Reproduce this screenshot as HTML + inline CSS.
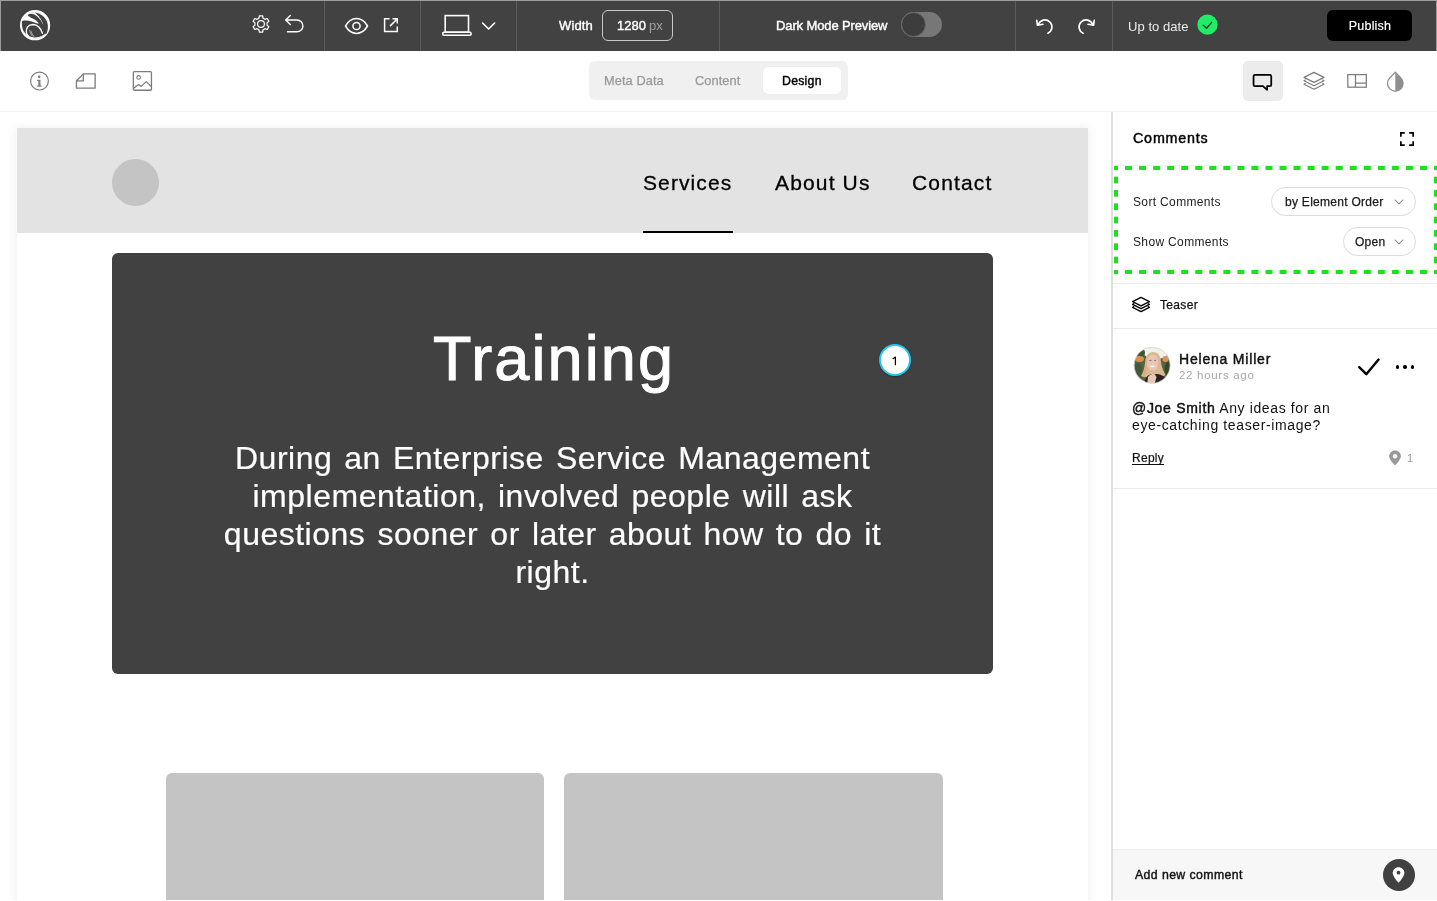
<!DOCTYPE html>
<html><head><meta charset="utf-8"><title>Editor</title>
<style>
html,body{margin:0;padding:0;}
body{width:1437px;height:901px;overflow:hidden;position:relative;background:#fff;font-family:"Liberation Sans", sans-serif;}
.t{position:absolute;white-space:nowrap;will-change:transform;}
svg{overflow:visible;}
</style></head><body>
<div style="position:absolute;left:0px;top:0px;width:1437px;height:51px;background:#424242;"></div>
<div style="position:absolute;left:0px;top:0px;width:1437px;height:1px;background:#9c9c9c;"></div>
<div style="position:absolute;left:0px;top:0px;width:1px;height:51px;background:#9c9c9c;"></div>
<div style="position:absolute;left:1436px;top:0px;width:1px;height:51px;background:#9c9c9c;"></div>
<div style="position:absolute;left:324px;top:1px;width:1px;height:50px;background:#5c5c5c;"></div>
<div style="position:absolute;left:420px;top:1px;width:1px;height:50px;background:#5c5c5c;"></div>
<div style="position:absolute;left:516px;top:1px;width:1px;height:50px;background:#5c5c5c;"></div>
<div style="position:absolute;left:719px;top:1px;width:1px;height:50px;background:#5c5c5c;"></div>
<div style="position:absolute;left:1015px;top:1px;width:1px;height:50px;background:#5c5c5c;"></div>
<div style="position:absolute;left:1112px;top:1px;width:1px;height:50px;background:#5c5c5c;"></div>
<svg style="position:absolute;left:18px;top:8px" width="35" height="35" viewBox="18 8 35 35">
<circle cx="35.1" cy="25.2" r="13.3" fill="#fff"/>
<circle cx="35.1" cy="25.2" r="14.05" fill="none" stroke="#fff" stroke-width="2.1"/>
<path d="M34.6 12.5 C41 12.9 47.4 18.5 47.9 25.5 C48.1 29 47.4 32 46 34.5 L44.2 32.5 C44.6 24 40.6 16.8 34.6 12.5 Z" fill="#424242"/>
<path d="M27.6 15.3 C29.3 13.6 32 13.4 34.2 14.6 C38 16.6 41.6 20.5 43 24.5 C43.6 27 43.5 30 43 32 L41.5 30 C40.5 27 39.5 24.5 37.8 22.2 C35.5 19.6 33 18.6 31 17.7 C29.8 17 28.5 16.2 27.6 15.3 Z" fill="#424242"/>
<path d="M22.0 20.9 C25 20.2 28.4 20.2 31.8 21.4 C34.5 22.6 37 23.5 39.8 23.8 L43.2 24.3 C45 26.5 46.2 29.5 46.4 31.5 L44.5 34.3 C41.5 36.6 38 37.4 34.5 37.4 C30.5 37.2 27.2 35.6 24.8 32.8 C23 30.5 22 27.5 21.9 24.5 Z" fill="#424242"/>
<path d="M28.7 36.6 C26.3 34 25.7 30 27.6 26.8 C29 25 31 24.5 33.2 24.5 C37 24.6 40.5 27.6 42.4 33.2" stroke="#fff" stroke-width="1.35" fill="none" stroke-linecap="round"/>
<path d="M29.6 29.8 C29.9 32.5 31 34.8 32.8 36.4 M31.2 31.2 C31.6 33.5 32.6 35.3 34.3 36.6" stroke="#fff" stroke-width="0.55" fill="none"/>
</svg>
<svg style="position:absolute;left:250.9px;top:14px" width="20" height="20" viewBox="0 0 20 20" fill="none">
<path d="M7.98 4.14 L8.35 1.87 L11.65 1.87 L12.02 4.14 L14.07 5.32 L16.22 4.50 L17.87 7.37 L16.09 8.82 L16.09 11.18 L17.87 12.63 L16.22 15.50 L14.07 14.68 L12.02 15.86 L11.65 18.13 L8.35 18.13 L7.98 15.86 L5.93 14.68 L3.78 15.50 L2.13 12.63 L3.91 11.18 L3.91 8.82 L2.13 7.37 L3.78 4.50 L5.93 5.32 Z" stroke="#fff" stroke-width="1.2" stroke-linejoin="round"/>
<circle cx="10" cy="10" r="3.4" stroke="#fff" stroke-width="1.2"/>
</svg>
<svg style="position:absolute;left:283px;top:13px" width="24" height="22" viewBox="0 0 24 22" fill="none">
<path d="M3 7 H14 A5.9 5.9 0 0 1 14 18.8 H4.5" stroke="#fff" stroke-width="1.4" stroke-linecap="round"/>
<path d="M7.3 2.6 L2.8 7 L7.3 11.4" stroke="#fff" stroke-width="1.4" stroke-linecap="round" stroke-linejoin="round"/>
</svg>
<svg style="position:absolute;left:343px;top:15.5px" width="27" height="20" viewBox="0 0 27 20" fill="none">
<path d="M2.5 10 C6 4 10 2.6 13.5 2.6 C17 2.6 21 4 24.5 10 C21 16 17 17.4 13.5 17.4 C10 17.4 6 16 2.5 10 Z" stroke="#fff" stroke-width="1.5" stroke-linejoin="round"/>
<circle cx="13.5" cy="10" r="3.6" stroke="#fff" stroke-width="1.5"/>
</svg>
<svg style="position:absolute;left:382px;top:16px" width="18" height="18" viewBox="0 0 18 18" fill="none">
<path d="M7.5 2.8 H2.6 V15.4 H15.3 V10.5" stroke="#fff" stroke-width="1.5"/>
<path d="M10.5 2.8 H15.3 V7.6 M15.1 3 L8 10.1" stroke="#fff" stroke-width="1.5"/>
</svg>
<svg style="position:absolute;left:440px;top:13px" width="33" height="25" viewBox="0 0 33 25" fill="none">
<rect x="5.2" y="2.6" width="23.3" height="16.6" stroke="#fff" stroke-width="1.6"/>
<rect x="2.8" y="19.2" width="28.2" height="3" rx="1" stroke="#fff" stroke-width="1.6"/>
</svg>
<svg style="position:absolute;left:480px;top:19.6px" width="17" height="13" viewBox="0 0 17 13" fill="none">
<path d="M2.6 3 L8.6 9 L14.6 3" stroke="#fff" stroke-width="1.6" stroke-linecap="round" stroke-linejoin="round"/>
</svg>
<div class="t" style="left:558.5px;top:19.20px;font-size:13px;line-height:13px;font-weight:400;color:#fff;letter-spacing:0.15px;-webkit-text-stroke:0.4px #fff;">Width</div>
<div style="position:absolute;left:602px;top:10px;width:71px;height:31px;box-sizing:border-box;border:1.5px solid #c8c8c8;border-radius:6px;"></div>
<div class="t" style="left:617.3px;top:19.20px;font-size:13px;line-height:13px;font-weight:400;color:#fff;letter-spacing:0px;-webkit-text-stroke:0.4px #fff;">1280</div>
<div class="t" style="left:648.5px;top:19.20px;font-size:13px;line-height:13px;font-weight:400;color:#a0a0a0;letter-spacing:0px;">px</div>
<div class="t" style="left:776px;top:18.90px;font-size:13px;line-height:13px;font-weight:400;color:#fff;letter-spacing:-0.12px;-webkit-text-stroke:0.4px #fff;">Dark Mode Preview</div>
<div style="position:absolute;left:901px;top:12px;width:41px;height:25px;box-sizing:border-box;background:#777;border-radius:13px;"></div>
<div style="position:absolute;left:901px;top:12px;width:25px;height:25px;box-sizing:border-box;background:#3d3d3d;border:1.5px solid #6a6a6a;border-radius:50%;"></div>
<svg style="position:absolute;left:1033px;top:15px" width="24" height="22" viewBox="0 0 24 22" fill="none"><path d="M5.47 9.52 A6.95 6.95 0 1 1 14.94 18.2" stroke="#fff" stroke-width="1.65" stroke-linecap="round"/>
<path d="M3.75 5.3 L4.4 10.2 L9.9 9.3" stroke="#fff" stroke-width="1.65" stroke-linecap="round" stroke-linejoin="round"/></svg>
<svg style="position:absolute;left:1073.85px;top:15px" width="24" height="22" viewBox="0 0 24 22" fill="none"><g transform="translate(24 0) scale(-1 1)"><path d="M5.47 9.52 A6.95 6.95 0 1 1 14.94 18.2" stroke="#fff" stroke-width="1.65" stroke-linecap="round"/>
<path d="M3.75 5.3 L4.4 10.2 L9.9 9.3" stroke="#fff" stroke-width="1.65" stroke-linecap="round" stroke-linejoin="round"/></g></svg>
<div class="t" style="left:1128px;top:19.90px;font-size:13px;line-height:13px;font-weight:400;color:#eaeaea;letter-spacing:0.05px;">Up to date</div>
<svg style="position:absolute;left:1197px;top:14px" width="21" height="21" viewBox="0 0 21 21" fill="none">
<circle cx="10.5" cy="10.7" r="10.1" fill="#21ec67"/>
<path d="M6.3 11.3 L9.6 14.3 L14.6 8.4" stroke="#2d3a30" stroke-width="1.45" stroke-linecap="round" stroke-linejoin="round"/>
</svg>
<div style="position:absolute;left:1327px;top:10px;width:85px;height:31px;background:#000;border-radius:6px;"></div>
<div class="t" style="left:1329.5px;width:80px;text-align:center;top:20.07px;font-size:12.5px;line-height:12.5px;font-weight:400;color:#fff;letter-spacing:0.2px;-webkit-text-stroke:0.2px #fff;">Publish</div>
<div style="position:absolute;left:0px;top:110.5px;width:1437px;height:1.2px;background:#f2f2f2;"></div>
<svg style="position:absolute;left:28px;top:70px" width="23" height="23" viewBox="0 0 23 23" fill="none">
<circle cx="11.5" cy="11.05" r="8.9" stroke="#7c7c7c" stroke-width="1.15"/>
<circle cx="11.2" cy="6.8" r="1.35" fill="#7c7c7c"/>
<path d="M9.1 9.8 H12.5 V15.4 H13.7 V16.8 H9.3 V15.4 H10.3 V10.9 H9.1 Z" fill="#7c7c7c"/>
</svg>
<svg style="position:absolute;left:74px;top:71px" width="24" height="20" viewBox="0 0 24 20" fill="none">
<path d="M9.3 2.85 H21.15 V17.15 H2.45 V9.8 Z" stroke="#7c7c7c" stroke-width="1.3" stroke-linejoin="round"/>
<path d="M9.3 2.85 V9.8 H2.45" stroke="#7c7c7c" stroke-width="1.3" stroke-linejoin="round"/>
</svg>
<svg style="position:absolute;left:131px;top:69px" width="24" height="24" viewBox="0 0 24 24" fill="none">
<rect x="2.35" y="2.65" width="18.1" height="18.6" rx="1" stroke="#7c7c7c" stroke-width="1.3"/>
<circle cx="7.6" cy="8.4" r="1.8" stroke="#7c7c7c" stroke-width="1.1"/>
<path d="M2.1 19.8 L7.6 15.4 L10.2 17.4 L15.3 12.6 L20.6 17.9" stroke="#7c7c7c" stroke-width="1.3" stroke-linejoin="round"/>
</svg>
<div style="position:absolute;left:589px;top:61px;width:259px;height:39px;background:#f0f0f0;border-radius:6px;"></div>
<div style="position:absolute;left:763px;top:67px;width:78px;height:27px;background:#fff;border-radius:5px;box-shadow:0 0 1px rgba(0,0,0,0.08);"></div>
<div class="t" style="left:604px;top:74.73px;font-size:12.8px;line-height:12.8px;font-weight:400;color:#999;letter-spacing:0.08px;-webkit-text-stroke:0.25px #999;">Meta Data</div>
<div class="t" style="left:695px;top:74.73px;font-size:12.8px;line-height:12.8px;font-weight:400;color:#999;letter-spacing:0.08px;-webkit-text-stroke:0.25px #999;">Content</div>
<div class="t" style="left:782px;top:74.79px;font-size:12.3px;line-height:12.3px;font-weight:400;color:#000;letter-spacing:0.25px;-webkit-text-stroke:0.4px #000;">Design</div>
<div style="position:absolute;left:1243px;top:61px;width:40px;height:40px;background:#ececec;border-radius:5px;"></div>
<svg style="position:absolute;left:1250px;top:71px" width="25" height="23" viewBox="0 0 25 23" fill="none">
<path d="M5.05 3.75 H19.75 Q21.25 3.75 21.25 5.25 V13.65 Q21.25 15.15 19.75 15.15 H17.1 V18.8 L12.9 15.15 H5.05 Q3.55 15.15 3.55 13.65 V5.25 Q3.55 3.75 5.05 3.75 Z" stroke="#000" stroke-width="1.75" stroke-linejoin="round"/>
</svg>
<svg style="position:absolute;left:1302px;top:70px" width="24" height="23" viewBox="0 0 24 23" fill="none">
<path d="M12 2.4 L22 7.4 L12 12.4 L2 7.4 Z" stroke="#7c7c7c" stroke-width="1.2" stroke-linejoin="round"/>
<path d="M3.6 9.8 L2 10.8 L12 15.8 L22 10.8 L20.4 9.8" stroke="#7c7c7c" stroke-width="1.2" stroke-linejoin="round"/>
<path d="M3.6 13.2 L2 14.2 L12 19.2 L22 14.2 L20.4 13.2" stroke="#7c7c7c" stroke-width="1.2" stroke-linejoin="round"/>
</svg>
<svg style="position:absolute;left:1345px;top:72px" width="24" height="18" viewBox="0 0 24 18" fill="none">
<rect x="2.8" y="2.6" width="18.5" height="12.6" stroke="#7c7c7c" stroke-width="1.25"/>
<path d="M10.5 2.6 V15.2 M10.5 11.05 H21.3" stroke="#7c7c7c" stroke-width="1.25"/>
</svg>
<svg style="position:absolute;left:1384px;top:70px" width="22" height="24" viewBox="0 0 22 24" fill="none">
<path d="M11.3 2.2 L16.9 7.97 A7.8 7.8 0 1 1 5.7 7.97 Z" stroke="#8a8a8a" stroke-width="1.2" stroke-linejoin="round"/>
<path d="M11.3 2.2 L16.9 7.97 A7.8 7.8 0 0 1 11.3 21.2 Z" fill="#8f8f8f"/>
</svg>
<div style="position:absolute;left:17px;top:128px;width:1071px;height:800px;background:#fff;box-shadow:0 0 10px rgba(0,0,0,0.075);"></div>
<div style="position:absolute;left:17px;top:128px;width:1071px;height:105px;background:#e3e3e3;"></div>
<div style="position:absolute;left:112px;top:159px;width:47px;height:47px;background:#c4c4c4;border-radius:50%;"></div>
<div class="t" style="left:643px;top:171.96px;font-size:21px;line-height:21px;font-weight:400;color:#000;letter-spacing:1.1px;-webkit-text-stroke:0.3px #000;">Services</div>
<div class="t" style="left:775px;top:171.96px;font-size:21px;line-height:21px;font-weight:400;color:#000;letter-spacing:1.15px;-webkit-text-stroke:0.3px #000;">About Us</div>
<div class="t" style="left:912px;top:171.96px;font-size:21px;line-height:21px;font-weight:400;color:#000;letter-spacing:1.15px;-webkit-text-stroke:0.3px #000;">Contact</div>
<div style="position:absolute;left:643px;top:231px;width:90px;height:2px;background:#000;"></div>
<div style="position:absolute;left:112px;top:253px;width:881px;height:421px;background:#414141;border-radius:6px;"></div>
<div class="t" style="left:153.60000000000002px;width:800px;text-align:center;top:327.18px;font-size:63px;line-height:63px;font-weight:400;color:#fff;letter-spacing:2.1px;-webkit-text-stroke:1px #fff;">Training</div>
<div class="t" style="left:162.25px;width:781px;top:439.1px;font-size:32px;line-height:38px;color:#fff;text-align:center;letter-spacing:0.5px;word-spacing:2.7px;-webkit-text-stroke:0.2px #fff;">During an Enterprise Service Management<br>implementation, involved people will ask<br>questions sooner or later about how to do it<br>right.</div>
<div style="position:absolute;left:878.6px;top:344.3px;width:32px;height:32px;box-sizing:border-box;background:#fff;border:2px solid #1fc7f2;border-radius:50%;box-shadow:0 1px 2px rgba(0,0,0,0.25);"></div>
<svg style="position:absolute;left:888px;top:353.5px" width="14" height="14" viewBox="0 0 14 14" fill="none"><path d="M4.7 5 L7.4 3.1 V11.3" stroke="#000" stroke-width="1.25" stroke-linejoin="round"/></svg>
<div style="position:absolute;left:166px;top:773px;width:378px;height:200px;background:#c4c4c4;border-radius:6px;"></div>
<div style="position:absolute;left:564px;top:773px;width:379px;height:200px;background:#c4c4c4;border-radius:6px;"></div>
<div style="position:absolute;left:1111px;top:112px;width:326px;height:789px;background:#fff;"></div>
<div style="position:absolute;left:1111px;top:112px;width:2px;height:789px;background:#dedede;"></div>
<div class="t" style="left:1132.8px;top:130.73px;font-size:14.3px;line-height:14.3px;font-weight:400;color:#000;letter-spacing:0.8px;-webkit-text-stroke:0.45px #000;">Comments</div>
<svg style="position:absolute;left:1398px;top:130px" width="18" height="18" viewBox="0 0 18 18" fill="none">
<path d="M2.85 6.8 V2.85 H6.8 M11.2 2.85 H15.15 V6.8 M15.15 11.2 V15.15 H11.2 M6.8 15.15 H2.85 V11.2" stroke="#000" stroke-width="1.7"/>
</svg>
<div style="position:absolute;left:1113px;top:165px;width:324px;height:1px;background:#f0f0f0;"></div>
<div class="t" style="left:1132.5px;top:195.63px;font-size:12px;line-height:12px;font-weight:400;color:#222;letter-spacing:0.35px;">Sort Comments</div>
<div class="t" style="left:1132.5px;top:235.83px;font-size:12px;line-height:12px;font-weight:400;color:#222;letter-spacing:0.35px;">Show Comments</div>
<div style="position:absolute;left:1271px;top:187px;width:145px;height:29px;box-sizing:border-box;border:1px solid #dcdcdc;border-radius:15px;"></div>
<div class="t" style="left:1285px;top:195.63px;font-size:12px;line-height:12px;font-weight:400;color:#1a1a1a;letter-spacing:0.28px;-webkit-text-stroke:0.25px #1a1a1a;">by Element Order</div>
<div style="position:absolute;left:1343px;top:227px;width:73px;height:29px;box-sizing:border-box;border:1px solid #dcdcdc;border-radius:15px;"></div>
<div class="t" style="left:1355px;top:235.83px;font-size:12px;line-height:12px;font-weight:400;color:#1a1a1a;letter-spacing:0.28px;-webkit-text-stroke:0.25px #1a1a1a;">Open</div>
<svg style="position:absolute;left:1393px;top:196.5px" width="12" height="10" viewBox="0 0 12 10" fill="none"><path d="M2.2 3.2 L6 6.8 L9.8 3.2" stroke="#8c8c8c" stroke-width="1.15" stroke-linecap="round" stroke-linejoin="round"/></svg>
<svg style="position:absolute;left:1393px;top:236.5px" width="12" height="10" viewBox="0 0 12 10" fill="none"><path d="M2.2 3.2 L6 6.8 L9.8 3.2" stroke="#8c8c8c" stroke-width="1.15" stroke-linecap="round" stroke-linejoin="round"/></svg>
<svg style="position:absolute;left:0;top:0" width="1437" height="901" viewBox="0 0 1437 901"><g fill="#1ee01e"><rect x="1114.00" y="166.00" width="4.00" height="4.00"/><rect x="1434.00" y="166.00" width="4.00" height="4.00"/><rect x="1114.00" y="270.00" width="4.00" height="4.00"/><rect x="1434.00" y="270.00" width="4.00" height="4.00"/><rect x="1125.02" y="166.00" width="7.02" height="4.00"/><rect x="1125.02" y="270.00" width="7.02" height="4.00"/><rect x="1139.07" y="166.00" width="7.02" height="4.00"/><rect x="1139.07" y="270.00" width="7.02" height="4.00"/><rect x="1153.11" y="166.00" width="7.02" height="4.00"/><rect x="1153.11" y="270.00" width="7.02" height="4.00"/><rect x="1167.16" y="166.00" width="7.02" height="4.00"/><rect x="1167.16" y="270.00" width="7.02" height="4.00"/><rect x="1181.20" y="166.00" width="7.02" height="4.00"/><rect x="1181.20" y="270.00" width="7.02" height="4.00"/><rect x="1195.24" y="166.00" width="7.02" height="4.00"/><rect x="1195.24" y="270.00" width="7.02" height="4.00"/><rect x="1209.29" y="166.00" width="7.02" height="4.00"/><rect x="1209.29" y="270.00" width="7.02" height="4.00"/><rect x="1223.33" y="166.00" width="7.02" height="4.00"/><rect x="1223.33" y="270.00" width="7.02" height="4.00"/><rect x="1237.38" y="166.00" width="7.02" height="4.00"/><rect x="1237.38" y="270.00" width="7.02" height="4.00"/><rect x="1251.42" y="166.00" width="7.02" height="4.00"/><rect x="1251.42" y="270.00" width="7.02" height="4.00"/><rect x="1265.47" y="166.00" width="7.02" height="4.00"/><rect x="1265.47" y="270.00" width="7.02" height="4.00"/><rect x="1279.51" y="166.00" width="7.02" height="4.00"/><rect x="1279.51" y="270.00" width="7.02" height="4.00"/><rect x="1293.56" y="166.00" width="7.02" height="4.00"/><rect x="1293.56" y="270.00" width="7.02" height="4.00"/><rect x="1307.60" y="166.00" width="7.02" height="4.00"/><rect x="1307.60" y="270.00" width="7.02" height="4.00"/><rect x="1321.64" y="166.00" width="7.02" height="4.00"/><rect x="1321.64" y="270.00" width="7.02" height="4.00"/><rect x="1335.69" y="166.00" width="7.02" height="4.00"/><rect x="1335.69" y="270.00" width="7.02" height="4.00"/><rect x="1349.73" y="166.00" width="7.02" height="4.00"/><rect x="1349.73" y="270.00" width="7.02" height="4.00"/><rect x="1363.78" y="166.00" width="7.02" height="4.00"/><rect x="1363.78" y="270.00" width="7.02" height="4.00"/><rect x="1377.82" y="166.00" width="7.02" height="4.00"/><rect x="1377.82" y="270.00" width="7.02" height="4.00"/><rect x="1391.87" y="166.00" width="7.02" height="4.00"/><rect x="1391.87" y="270.00" width="7.02" height="4.00"/><rect x="1405.91" y="166.00" width="7.02" height="4.00"/><rect x="1405.91" y="270.00" width="7.02" height="4.00"/><rect x="1419.96" y="166.00" width="7.02" height="4.00"/><rect x="1419.96" y="270.00" width="7.02" height="4.00"/><rect x="1114.00" y="176.67" width="4.00" height="6.67"/><rect x="1434.00" y="176.67" width="4.00" height="6.67"/><rect x="1114.00" y="190.00" width="4.00" height="6.67"/><rect x="1434.00" y="190.00" width="4.00" height="6.67"/><rect x="1114.00" y="203.33" width="4.00" height="6.67"/><rect x="1434.00" y="203.33" width="4.00" height="6.67"/><rect x="1114.00" y="216.67" width="4.00" height="6.67"/><rect x="1434.00" y="216.67" width="4.00" height="6.67"/><rect x="1114.00" y="230.00" width="4.00" height="6.67"/><rect x="1434.00" y="230.00" width="4.00" height="6.67"/><rect x="1114.00" y="243.33" width="4.00" height="6.67"/><rect x="1434.00" y="243.33" width="4.00" height="6.67"/><rect x="1114.00" y="256.67" width="4.00" height="6.67"/><rect x="1434.00" y="256.67" width="4.00" height="6.67"/></g></svg>
<div style="position:absolute;left:1113px;top:283px;width:324px;height:1px;background:#ececec;"></div>
<svg style="position:absolute;left:1130px;top:295px" width="22" height="20" viewBox="0 0 22 20" fill="none">
<path d="M11 2.4 L19.4 6.6 L11 10.8 L2.6 6.6 Z" stroke="#000" stroke-width="1.3" stroke-linejoin="round"/>
<path d="M4.2 8.5 L2.6 9.4 L11 13.6 L19.4 9.4 L17.8 8.5" stroke="#000" stroke-width="1.3" stroke-linejoin="round"/>
<path d="M4.2 11.4 L2.6 12.3 L11 16.6 L19.4 12.3 L17.8 11.4" stroke="#000" stroke-width="1.3" stroke-linejoin="round"/>
</svg>
<div class="t" style="left:1160px;top:298.73px;font-size:12px;line-height:12px;font-weight:400;color:#111;letter-spacing:0.33px;-webkit-text-stroke:0.25px #111;">Teaser</div>
<div style="position:absolute;left:1113px;top:328px;width:324px;height:1px;background:#ececec;"></div>
<svg style="position:absolute;left:1133px;top:346px" width="39" height="39" viewBox="0 0 39 39">
<defs><clipPath id="av"><circle cx="19.1" cy="19.35" r="18"/></clipPath>
<filter id="bl" x="-20%" y="-20%" width="140%" height="140%"><feGaussianBlur stdDeviation="0.65"/></filter></defs>
<g clip-path="url(#av)"><g filter="url(#bl)">
<rect x="-2" y="-2" width="43" height="43" fill="#566444"/>
<ellipse cx="23" cy="5" rx="13" ry="8" fill="#f3efe9"/>
<ellipse cx="8" cy="6.5" rx="4" ry="3.5" fill="#3c5232"/>
<ellipse cx="6.5" cy="13" rx="4.5" ry="3" fill="#dd8f50"/>
<ellipse cx="32.5" cy="13" rx="3" ry="3" fill="#d9965a"/>
<ellipse cx="35" cy="23" rx="3.5" ry="7" fill="#364a2c"/>
<ellipse cx="5" cy="25" rx="4" ry="8" fill="#44583a"/>
<path d="M20 6 C14.5 6 12.5 11 12 17 C11.5 22 10 27 8 30 C12 32 16 31 19 30 C23 31 28 32 32.5 29 C30.5 25 28.5 21 28 16 C27.5 10 25.5 6 20 6 Z" fill="#d9b892"/>
<path d="M10 29 C11 25 12 21 12.5 18 C13 23 12.5 27 11.5 31 Z" fill="#e8a46e"/>
<ellipse cx="19.7" cy="16.5" rx="5.6" ry="8" fill="#e9c6b6"/>
<ellipse cx="17.4" cy="14.3" rx="1.2" ry="0.6" fill="#8a6a5e"/>
<ellipse cx="22.1" cy="14.3" rx="1.2" ry="0.6" fill="#8a6a5e"/>
<ellipse cx="19.5" cy="20.3" rx="2.3" ry="1" fill="#fbf5f2"/>
<path d="M11 40 C11.5 34 13 30 17 28.5 L24 28 C29 28.5 33 31 34 36 L34 40 Z" fill="#27231f"/>
<path d="M14 40 L15 31 C16.5 28.5 19 27.5 21.5 28 L23.5 31 L21 40 Z" fill="#e6c8b8"/>
</g></g>
<circle cx="19.1" cy="19.35" r="18" fill="none" stroke="#d0d0d0" stroke-width="0.8"/>
</svg>
<div class="t" style="left:1179.2px;top:351.97px;font-size:14px;line-height:14px;font-weight:400;color:#111;letter-spacing:0.8px;-webkit-text-stroke:0.45px #111;">Helena Miller</div>
<div class="t" style="left:1179px;top:369.80px;font-size:11.5px;line-height:11.5px;font-weight:400;color:#a8a8a8;letter-spacing:0.7px;">22 hours ago</div>
<svg style="position:absolute;left:1356px;top:356px" width="26" height="22" viewBox="0 0 26 22" fill="none"><path d="M3.2 11.2 L10.3 18.2 L22.6 3.6" stroke="#000" stroke-width="2.4" stroke-linecap="round" stroke-linejoin="round"/></svg>
<div style="position:absolute;left:1395.5px;top:365.4px;width:3.6px;height:3.6px;background:#000;border-radius:50%;"></div>
<div style="position:absolute;left:1403.2px;top:365.4px;width:3.6px;height:3.6px;background:#000;border-radius:50%;"></div>
<div style="position:absolute;left:1410.8px;top:365.4px;width:3.6px;height:3.6px;background:#000;border-radius:50%;"></div>
<div class="t" style="left:1131.5px;top:399.5px;font-size:14px;line-height:17px;color:#111;letter-spacing:0.62px;width:260px;"><span style="letter-spacing:0.7px;-webkit-text-stroke:0.45px #111;">@Joe Smith</span> Any ideas for an<br>eye-catching teaser-image?</div>
<div class="t" style="left:1131.5px;top:452.03px;font-size:12px;line-height:12px;font-weight:400;color:#111;letter-spacing:0.28px;text-decoration:underline;text-underline-offset:2px;-webkit-text-stroke:0.2px #111;">Reply</div>
<svg style="position:absolute;left:1387px;top:449px" width="16" height="18" viewBox="0 0 16 18" fill="none"><path d="M8 1.6 C4.6 1.6 2.2 4.1 2.2 7.3 C2.2 10.8 8 16.6 8 16.6 C8 16.6 13.8 10.8 13.8 7.3 C13.8 4.1 11.4 1.6 8 1.6 Z" fill="#999"/><circle cx="8" cy="7.2" r="2.2" fill="#fff"/></svg>
<div class="t" style="left:1406.5px;top:452.76px;font-size:11px;line-height:11px;font-weight:400;color:#999;letter-spacing:0px;">1</div>
<div style="position:absolute;left:1113px;top:488px;width:324px;height:1px;background:#ececec;"></div>
<div style="position:absolute;left:1113px;top:849px;width:324px;height:52px;background:#f7f7f7;border-top:1px solid #ececec;"></div>
<div class="t" style="left:1134.5px;top:868.69px;font-size:12.3px;line-height:12.3px;font-weight:400;color:#111;letter-spacing:0.4px;-webkit-text-stroke:0.4px #111;">Add new comment</div>
<div style="position:absolute;left:1382.6px;top:858.6px;width:32px;height:32px;background:#414141;border-radius:50%;"></div>
<svg style="position:absolute;left:1391px;top:866px" width="16" height="18" viewBox="0 0 16 18" fill="none"><path d="M7.55 1.2 C4.3 1.2 1.7 3.7 1.7 6.9 C1.7 10.6 7.55 16.7 7.55 16.7 C7.55 16.7 13.4 10.6 13.4 6.9 C13.4 3.7 10.8 1.2 7.55 1.2 Z" fill="#fff"/><circle cx="7.5" cy="6.7" r="1.9" fill="#414141"/></svg>
<div style="position:absolute;left:0px;top:900px;width:1437px;height:1px;background:#fff;"></div>
</body></html>
